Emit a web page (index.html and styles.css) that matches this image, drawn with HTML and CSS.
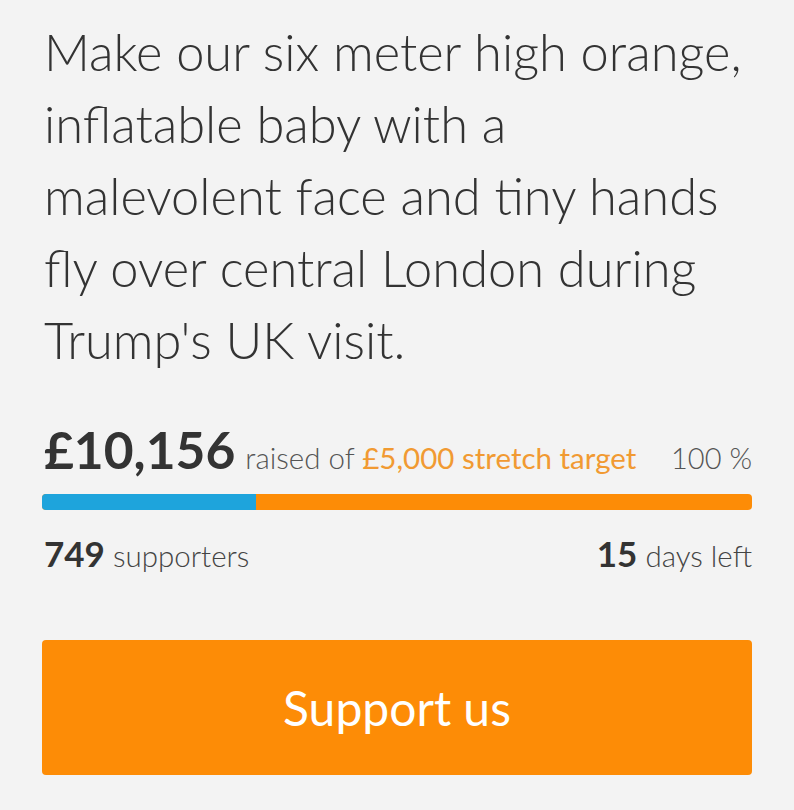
FILE: index.html
```html
<!DOCTYPE html>
<html lang="en">
<head>
    <meta charset="UTF-8">
    <meta name="viewport" content="width=device-width, initial-scale=1.0">
    <title>Trump Baby</title>
    <link rel="stylesheet" href="styles.css">
</head>
<body>

    <div class="campaign">
        <h1 class="campaign-title">Make our six meter high orange, inflatable baby with a malevolent face and tiny hands fly over central London during Trump's UK visit.</h1>

        <div class="funding">
            <div class="funding-line">
                <span class="raised-amount">£10,156</span>
                <span class="raised-of">raised of <span class="target">£5,000 stretch target</span></span>
                <span class="percent">100 %</span>
            </div>

            <div class="progress">
                <div class="progress-fill" style="width: 30.1%"></div>
            </div>

            <div class="stats">
                <div class="stat"><b>749</b> supporters</div>
                <div class="stat"><b>15</b> days left</div>
            </div>
        </div>

        <a href="#" class="support-button">Support us</a>
    </div>

</body>
</html>
```

FILE: styles.css
```css
body {
    margin: 0;
    background-color: #f3f3f3;
    font-family: 'Lato', 'Open Sans', sans-serif;
    color: #333;
}

.campaign {
    padding: 16px 42px 0 42px;
}

.campaign-title {
    margin: 0 0 0 2px;
    font-size: 50.6px;
    font-weight: 300;
    line-height: 72px;
    color: #333;
}

.funding {
    margin-top: 42px;
}

.funding-line {
    display: flex;
    align-items: baseline;
    padding-left: 2px;
}

.raised-amount {
    font-size: 51.5px;
    font-weight: 700;
    color: #333;
    margin-right: 10px;
}

.raised-of {
    font-size: 29.5px;
    font-weight: 300;
    color: #555;
}

.target {
    font-weight: 400;
    color: #f19a32;
}

.percent {
    margin-left: auto;
    font-size: 29px;
    font-weight: 300;
    color: #555;
}

.progress {
    margin-top: 14px;
    height: 16px;
    border-radius: 4px;
    background: #fd8c06;
    overflow: hidden;
}

.progress-fill {
    height: 100%;
    background: #1ea4dc;
}

.stats {
    display: flex;
    justify-content: space-between;
    align-items: baseline;
    margin-top: 22px;
    padding-left: 2px;
}

.stat {
    font-size: 29.5px;
    font-weight: 300;
    color: #444;
}

.stat b {
    font-size: 35px;
    font-weight: 700;
    color: #333;
}

.support-button {
    display: flex;
    justify-content: center;
    align-items: center;
    margin-top: 66px;
    height: 135px;
    border-radius: 4px;
    background: #fd8c06;
    color: #fff;
    font-size: 48px;
    font-weight: 400;
    text-decoration: none;
}
```
